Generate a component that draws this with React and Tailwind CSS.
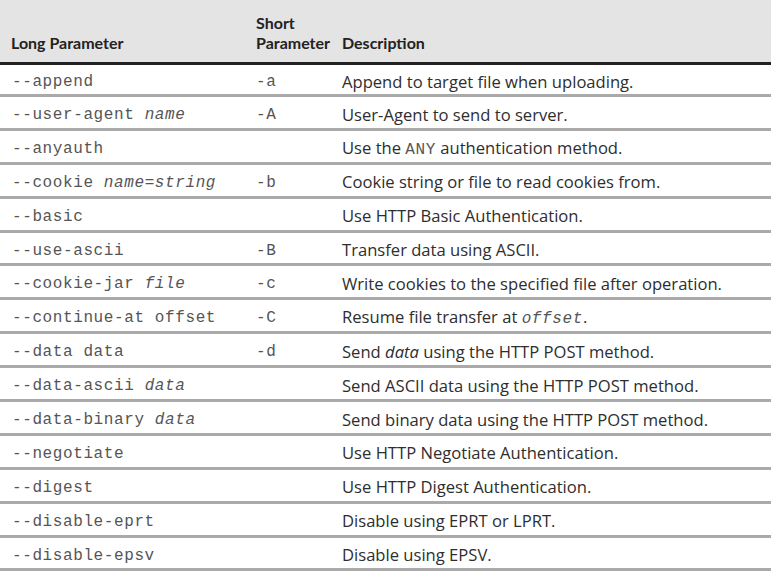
const mono = 'font-["Liberation_Mono",monospace] text-[16px] tracking-[0.6px] text-[#555]';

const rows = [
  { long: <>--append</>, short: '-a', desc: <>Append to target file when uploading.</> },
  { long: <>--user-agent <i>name</i></>, short: '-A', desc: <>User-Agent to send to server.</> },
  { long: <>--anyauth</>, short: '', desc: <>Use the <span className={mono}>ANY</span> authentication method.</> },
  { long: <>--cookie <i>name=string</i></>, short: '-b', desc: <>Cookie string or file to read cookies from.</> },
  { long: <>--basic</>, short: '', desc: <>Use HTTP Basic Authentication.</> },
  { long: <>--use-ascii</>, short: '-B', desc: <>Transfer data using ASCII.</> },
  { long: <>--cookie-jar <i>file</i></>, short: '-c', desc: <>Write cookies to the specified file after operation.</> },
  { long: <>--continue-at offset</>, short: '-C', desc: <>Resume file transfer at <i className={mono}>offset</i>.</> },
  { long: <>--data data</>, short: '-d', desc: <>Send <i>data</i> using the HTTP POST method.</> },
  { long: <>--data-ascii <i>data</i></>, short: '', desc: <>Send ASCII data using the HTTP POST method.</> },
  { long: <>--data-binary <i>data</i></>, short: '', desc: <>Send binary data using the HTTP POST method.</> },
  { long: <>--negotiate</>, short: '', desc: <>Use HTTP Negotiate Authentication.</> },
  { long: <>--digest</>, short: '', desc: <>Use HTTP Digest Authentication.</> },
  { long: <>--disable-eprt</>, short: '', desc: <>Disable using EPRT or LPRT.</> },
  { long: <>--disable-epsv</>, short: '', desc: <>Disable using EPSV.</> },
];

export default function App() {
  return (
    <div className="w-[773px] h-[575px] bg-white overflow-hidden">
      <div className="w-[771px] font-['Open_Sans',sans-serif] text-[16.6px] text-[#2e2e2e]">
        <div className="grid grid-cols-[256px_86px_1fr] h-[65px] bg-[#e4e4e4] border-b-[3px] border-[#222] items-end pb-[9px] font-['Lato',sans-serif] font-bold text-[16px] leading-[20px] text-[#222]">
          <div className="pl-[11px]">Long Parameter</div>
          <div>Short<br />Parameter</div>
          <div>Description</div>
        </div>
        {rows.map((r, i) => (
          <div key={i} className={`grid grid-cols-[256px_86px_1fr] ${i === 0 ? 'h-[32px]' : 'h-[33.9px]'} border-b-[3px] border-[#aaa] items-center pt-[5px]`}>
            <div className={`pl-[12px] ${mono}`}>{r.long}</div>
            <div className={mono}>{r.short}</div>
            <div>{r.desc}</div>
          </div>
        ))}
      </div>
    </div>
  );
}
